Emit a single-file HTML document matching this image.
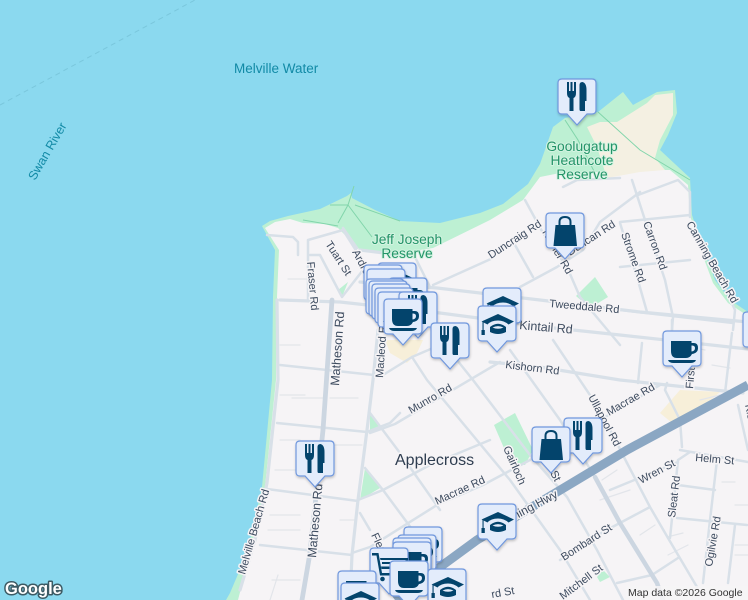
<!DOCTYPE html>
<html><head><meta charset="utf-8">
<style>
html,body{margin:0;padding:0;background:#8bd9ef;width:748px;height:600px;overflow:hidden}
svg{display:block;position:absolute;left:0;top:0}
text{font-family:"Liberation Sans",sans-serif}
.r{font-size:11px;fill:#3d4b5f;stroke:#f6f4f6;stroke-width:3px;paint-order:stroke;stroke-linejoin:round}
.g{font-size:13.800px;fill:#239468;stroke:#d5f3e2;stroke-width:2px;paint-order:stroke;stroke-linejoin:round;text-anchor:middle}
.w{fill:#128aa6}
.road{fill:none;stroke:#d8e0e8;stroke-linejoin:round;stroke-linecap:round}
.mn{stroke-width:1.200;stroke:#e2e5ea}
.sm{stroke-width:2.500}
.md{stroke-width:3.200}
.lg{stroke-width:4.800;stroke:#ccd6e1}
.ic{fill:#03446c}
</style></head><body>
<svg width="748" height="600" viewBox="0 0 748 600" xmlns="http://www.w3.org/2000/svg">
<defs>
<filter id="s" x="-20%" y="-20%" width="140%" height="140%"><feDropShadow dx="0.500" dy="1.500" stdDeviation="1.200" flood-color="#000" flood-opacity=".22"/></filter>
<path id="p" d="M4 0H34Q38 0 38 4V31Q38 35 34 35H29L19 46L9 35H4Q0 35 0 31V4Q0 0 4 0Z" fill="#e3ecfb" stroke="#6f97dd" stroke-width="1.200" filter="url(#s)"/>
<g id="cup"><use href="#p"/><path class="ic" d="M8 10H28.500V12H31Q35 12 35 17Q35 22 29 23Q27 27 23 27H14Q8 27 8 20ZM28.500 14.500V20.500Q32 20 32 17Q32 14.500 28.500 14.500ZM5 29H33Q32 32 27 32H11Q6 32 5 29Z"/></g>
<g id="fork"><use href="#p"/><path class="ic" d="M9 3H11V12H12.500V3H14.500V12H16V3H18V14Q18 18 15.500 19V32H11.500V19Q9 18 9 14ZM24.500 3Q28.500 4 28.500 11V22H27V32H22.500Q21.500 32 21.500 30V6Q21.500 3 24.500 3Z"/></g>
<g id="cap"><use href="#p"/><path class="ic" d="M20 8L36 15.500L30.500 18.500Q26 14.500 20 14.500Q13 14.500 9.500 18.500L5.600 16.500V24H6.800V29H3.500V24H4.500V16L3.500 15.500ZM12 21Q20 14.500 28 21V26Q20 30 12 26ZM14.500 21.500Q20 24 25.500 21.500Q20 18.800 14.500 21.500Z"/></g>
<g id="bag"><use href="#p"/><path class="ic" d="M12.500 12V9Q12.500 3 19 3Q25.500 3 25.500 9V12H29L31 33H7.500L9.500 12ZM14.500 12H23.500V9Q23.500 5 19 5Q14.500 5 14.500 9Z"/></g>
<g id="cart"><use href="#p"/><path class="ic" d="M2 5H8.500L12 25H33V27.500H10L6.500 7.500H2ZM10 10H38V21H11.500L11 18.500H35.500V16H12V14H35.500V12H10.500Z"/><circle class="ic" cx="12.500" cy="31" r="2.300"/><circle class="ic" cx="29" cy="31" r="2.300"/></g>
</defs>

<rect width="748" height="600" fill="#8bd9ef"/>
<path d="M0 105L195 0" stroke="#74bfd4" stroke-width="1" stroke-dasharray="5 4" fill="none" opacity=".7"/>

<!-- green coast -->
<path fill="#bdf0d3" d="M262 226L270 221L288 216L320 209L347 196L351 193L352 198L375 210L400 221L440 223L480 213L503 204L528 184L540 164L553 127L565 118L598 112L623 92L633 105L657 92L675 90L677 113L668 135L660 150L690 178L692 215L700 240L715 280L730 300L748 312V600H226L230 593L247 553L262 487L272 380L273 297L275 250Z"/>
<!-- land -->
<path fill="#f6f4f6" d="M265 228L275 222L290 219L303 223L325 224L338 228L360 250L400 253L433 248L490 220L523 200L540 177L560 173L600 172L640 170L670 170L688 185L690 215L698 243L713 283L728 303L748 316V600H238L250 553L265 487L276 380L277 297L279 250Z"/>
<!-- beige reserve end -->
<path fill="#f4f0e2" d="M587 127L600 122L617 122L647 103L655 95L673 93L673 115L660 140L655 158L665 170L640 172L607 178L597 147Z"/>
<!-- parks -->
<path fill="#bdf0d3" d="M494 425L515 413L533 450L525 465L510 462Z"/>
<path fill="#bdf0d3" d="M576 296L595 277L608 297L590 308Z"/>
<path fill="#bdf0d3" d="M365 468L380 488L360 500Z"/>
<path fill="#bdf0d3" d="M370 413L380 427L370 432Z"/>
<path fill="#bdf0d3" d="M338 290L348 282L342 297Z"/>
<path fill="#bdf0d3" d="M597 577L603 570L610 577L600 582Z"/>
<path fill="#bdf0d3" d="M360 265L375 258L370 270Z" opacity="0"/>
<!-- commercial -->
<path fill="#f7efd9" d="M385 340L423 340L417 353L407 363L390 353Z"/>
<path fill="#f7efd9" d="M660 413L680 390L720 392L700 410L677 427Z"/>

<!-- park paths -->
<g fill="none" stroke="#82d5ab" stroke-width="1">
<path d="M338 223L348 205L354 186M330 205L348 205L372 237M565 120L578 140L596 175M598 112L640 150L690 180"/>
<path d="M303 220L338 226M355 205L400 221"/>
</g>

<!-- minor roads -->
<g class="road mn">
<path d="M288 279H307M280 345H300M280 395H305M280 440H300M275 470H298M270 515H300M268 530H300M292 398H325M330 398H358M335 445H362M340 520H355M278 575L270 600M272 580H300"/>
<path d="M602 480L617 470M600 500L630 490M640 535L655 525M667 537L683 533M668 555L688 545M735 545H748M735 555H748M722 482H735M735 505H748M700 400L720 395M680 345L705 350M712 365L730 368"/>
</g>

<!-- regular roads -->
<g class="road sm">
<path d="M267 235L293 237L298 242V255M308 240L343 230L362 260M308 240V300M310 255H320L342 297L363 270M343 228L357 248"/>
<path d="M632 180L645 220L665 280L673 317L672 330M620 223L637 277L647 312M620 222L690 215M620 267L690 260M620 310L733 323M638 195L678 180L690 192V217M692 230L720 277L735 310L733 330"/>
<path d="M525 200L543 233L567 267L580 297L620 345M520 287L557 267L583 250L600 222L640 192M515 245L533 277M493 258L433 285M415 257L430 287M563 187L577 180L620 178"/>
<path d="M667 383L665 390L680 420L682 447M642 343L638 383M732 333L725 393M672 320V335"/>
<path d="M595 477L620 523M627 463L650 507L668 538L697 587M678 460L670 538M678 485L715 490M677 518L747 525M717 460L710 520L703 583M735 525L728 583M652 575L678 558M617 583L652 575M560 560L603 532L650 507M678 460L690 452M610 490L678 462M680 450L748 462M738 405L748 450"/>
<path d="M457 360L473 380L530 455L567 497L597 550L623 600M412 357L427 380L510 480L560 550L590 600M510 350L560 420L595 477M553 340L600 410L627 463"/>
<path d="M383 375L412 357L440 345M370 433L395 424L500 362M370 413L400 453L440 510M365 468L383 490L420 540M358 500L383 490L430 465L490 440M360 513L370 530M352 553L370 547L437 505L483 485L530 460L600 420L660 385"/>
<path d="M277 423L367 432L390 423L400 413M267 489L358 501M260 545L352 555"/>
<path d="M280 365L374 375L383 375"/>
</g>

<!-- main roads -->
<g class="road md">
<path d="M360 282L437 288L540 300L640 312L748 322"/>
<path d="M280 300L340 302L440 313L478 318L545 327L620 335L748 349"/>
<path d="M490 362L540 367L620 380L743 393"/>
<path d="M277 300L278 380L267 483L255 540L240 590"/>
<path d="M378 330L373 380L367 430L358 500L352 555L350 600"/>
<path d="M360 250L415 257"/>
</g>
<path class="road lg" d="M332 300L326 387L323 430L310 553L302 600"/>
<path class="road" style="stroke-width:4.500;stroke:#ccd6e1" d="M595 477L620 523L657 583L663 600"/>

<!-- highway -->
<path d="M395 600L477 540L627 450L748 385" fill="none" stroke="#8ba7c3" stroke-width="9"/>

<!-- water labels -->
<text class="w" x="234" y="73" style="font-size:13.500px">Melville Water</text>
<text class="w" transform="translate(35,181) rotate(-60)" style="font-size:12.500px">Swan River</text>

<!-- park labels -->
<text class="g" x="582" y="151">Goolugatup</text>
<text class="g" x="582" y="165">Heathcote</text>
<text class="g" x="582" y="179">Reserve</text>
<text class="g" x="407" y="244">Jeff Joseph</text>
<text class="g" x="407" y="258">Reserve</text>

<!-- road labels -->
<text class="r" transform="translate(307,262) rotate(85)">Fraser Rd</text>
<text class="r" transform="translate(325,244) rotate(57)">Tuart St</text>
<text class="r" transform="translate(352,252) rotate(62)">Ardross</text>
<text class="r" transform="translate(339,386) rotate(-86)" style="font-size:12.500px">Matheson Rd</text>
<text class="r" transform="translate(316,558) rotate(-85)" style="font-size:12.500px">Matheson Rd</text>
<text class="r" transform="translate(383,378) rotate(-86)">Macleod Rd</text>
<text class="r" transform="translate(245,575) rotate(-74)">Melville Beach Rd</text>
<text class="r" transform="translate(371,535) rotate(65)">Fleming</text>
<text class="r" transform="translate(549,307) rotate(5)">Tweeddale Rd</text>
<text class="r" transform="translate(519,329) rotate(5)" style="font-size:12.500px">Kintail Rd</text>
<text class="r" transform="translate(505,368) rotate(7)">Kishorn Rd</text>
<text class="r" transform="translate(411,414) rotate(-30)">Munro Rd</text>
<text class="r" transform="translate(491,259) rotate(-33)">Duncraig Rd</text>
<text class="r" transform="translate(542,232) rotate(60)">Napier Rd</text>
<text class="r" transform="translate(570,256) rotate(-33)">Duncan Rd</text>
<text class="r" transform="translate(621,234) rotate(70)">Strome Rd</text>
<text class="r" transform="translate(643,223) rotate(70)">Carron Rd</text>
<text class="r" transform="translate(686,224) rotate(60)">Canning Beach Rd</text>
<text class="r" transform="translate(693,389) rotate(-85)">First Ave</text>
<text class="r" transform="translate(745,405) rotate(78)">Kishorn Rd</text>
<text class="r" transform="translate(609,416) rotate(-30)">Macrae Rd</text>
<text class="r" transform="translate(588,397) rotate(62)">Ullapool Rd</text>
<text class="r" transform="translate(503,448) rotate(66)">Gairloch</text>
<text class="r" transform="translate(550,473) rotate(62)">St</text>
<text class="r" transform="translate(437,505) rotate(-25)">Macrae Rd</text>
<text class="r" transform="translate(641,484) rotate(-28)">Wren St</text>
<text class="r" transform="translate(695,461) rotate(5)">Helm St</text>
<text class="r" transform="translate(675,518) rotate(-83)">Sleat Rd</text>
<text class="r" transform="translate(712,567) rotate(-80)">Ogilvie Rd</text>
<text class="r" transform="translate(564,561) rotate(-33)">Bombard St</text>
<text class="r" transform="translate(563,600) rotate(-37)">Mitchell St</text>
<text class="r" transform="translate(515,520) rotate(-28)" style="font-size:12px">ning Hwy</text>
<text class="r" transform="translate(492,598) rotate(-10)">rd St</text>

<text x="395" y="465" style="font-size:16px;fill:#2e3d50;stroke:#f6f4f6;stroke-width:3px;paint-order:stroke">Applecross</text>

<!-- pins -->
<use href="#fork" x="558" y="79"/>
<use href="#bag" x="546" y="213"/>
<use href="#cap" x="483" y="288"/>
<use href="#cap" x="478" y="306"/>
<use href="#cup" x="663" y="331"/>
<use href="#fork" x="564" y="418"/>
<use href="#bag" x="532" y="427"/>
<use href="#fork" x="296" y="441"/>
<use href="#cap" x="478" y="504"/>
<use href="#cup" x="743" y="312"/>

<use href="#cap" x="378" y="263"/>
<use href="#cup" x="364" y="265"/>
<use href="#cup" x="367" y="269"/>
<use href="#cup" x="389" y="278"/>
<use href="#cup" x="366" y="279"/>
<use href="#cup" x="369" y="281"/>
<use href="#cup" x="372" y="284"/>
<use href="#cup" x="375" y="288"/>
<use href="#cup" x="378" y="292"/>
<use href="#fork" x="399" y="292"/>
<use href="#fork" x="431" y="323"/>
<use href="#cup" x="384" y="299"/>

<use href="#cup" x="404" y="527"/>
<use href="#cup" x="398" y="535"/>
<use href="#cup" x="393" y="538"/>
<use href="#cup" x="393" y="542"/>
<use href="#cart" x="370" y="548"/>
<use href="#cup" x="338" y="571"/>
<use href="#cap" x="341" y="583"/>
<use href="#cup" x="390" y="561"/>
<use href="#cap" x="428" y="569"/>

<!-- footer -->
<rect x="626" y="586" width="122" height="14" fill="#f6f4f6" opacity=".85"/>
<text x="628" y="596" style="font-size:10.500px;fill:#333">Map data ©2026 Google</text>
<text x="5" y="594" style="font-size:16.500px;font-weight:bold;fill:#fff;stroke:#3c5a64;stroke-width:3px;paint-order:stroke;stroke-linejoin:round">Google</text>
</svg>
</body></html>
